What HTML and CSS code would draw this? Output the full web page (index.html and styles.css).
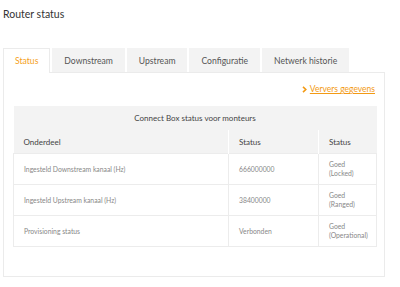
FILE: index.html
```html
<!DOCTYPE html>
<html>
<head>
<meta charset="utf-8">
<link rel="stylesheet" href="styles.css">
</head>
<body>
<h1 class="title">Router status</h1>
<ul class="tabs">
  <li class="tab active">Status</li>
  <li class="tab">Downstream</li>
  <li class="tab">Upstream</li>
  <li class="tab">Configuratie</li>
  <li class="tab">Netwerk historie</li>
</ul>
<div class="panel">
  <div class="actions">
    <a class="refresh" href="#"><svg class="chev" width="5" height="7" viewBox="0 0 5 7"><polyline points="1,0.8 3.8,3.5 1,6.2" fill="none" stroke="#f39a14" stroke-width="1.6"/></svg><span class="refresh-text">Ververs gegevens</span></a>
  </div>
  <table class="status-table">
    <colgroup>
      <col class="c1"><col class="c2"><col class="c3">
    </colgroup>
    <thead>
      <tr class="caption-row"><th colspan="3">Connect Box status voor monteurs</th></tr>
      <tr class="head-row"><th>Onderdeel</th><th>Status</th><th>Status</th></tr>
    </thead>
    <tbody>
      <tr><td>Ingesteld Downstream kanaal (Hz)</td><td>666000000</td><td>Goed<br>(Locked)</td></tr>
      <tr><td>Ingesteld Upstream kanaal (Hz)</td><td>38400000</td><td>Goed<br>(Ranged)</td></tr>
      <tr><td>Provisioning status</td><td>Verbonden</td><td>Goed<br>(Operational)</td></tr>
    </tbody>
  </table>
</div>
</body>
</html>
```
FILE: styles.css
```css
html, body {
  margin: 0;
  padding: 0;
  background: #fff;
}
body {
  padding: 0 3px;
  font-family: Lato, "Open Sans", sans-serif;
  color: #333;
}
.title {
  margin: 0;
  padding-top: 8px;
  height: 40px;
  font-size: 10.5px;
  line-height: 12px;
  font-weight: normal;
  color: #333;
}
.tabs {
  list-style: none;
  margin: 0;
  padding: 0;
  display: flex;
  gap: 2px;
  height: 24px;
  position: relative;
  z-index: 1;
}
.tab {
  height: 24px;
  box-sizing: border-box;
  padding: 0 11px;
  line-height: 24px;
  font-size: 8.6px;
  white-space: nowrap;
  color: #555;
  background: #f3f3f3;
  border: 1px solid #f3f3f3;
  border-bottom: none;
}
.tab.active {
  background: #fff;
  color: #f5a11c;
  border-color: #ebebeb;
  height: 25px;
}
.panel {
  width: 382px;
  height: 205px;
  box-sizing: border-box;
  border: 1px solid #ebebeb;
  padding: 8px 9px 0 9px;
}
.actions {
  display: flex;
  justify-content: flex-end;
  height: 25px;
}
.refresh {
  display: flex;
  align-items: center;
  gap: 3px;
  height: 16px;
  color: #f39a14;
  font-size: 8.5px;
  text-decoration: none;
}
.chev {
  display: block;
}
.refresh-text {
  text-decoration: underline;
}
.status-table {
  width: 363px;
  border-collapse: collapse;
  table-layout: fixed;
}
.c1 { width: 215px; }
.c2 { width: 90px; }
.c3 { width: 58px; }
.status-table th {
  background: #f3f3f3;
  font-weight: normal;
  color: #444;
  font-size: 8px;
  text-align: left;
  padding: 0 10px;
}
.caption-row th {
  text-align: center;
  height: 24px;
}
.head-row th {
  height: 23px;
  border-left: 1px solid #fff;
}
.head-row th:first-child { border-left: none; }
.status-table td {
  font-size: 6.8px;
  line-height: 9px;
  color: #888;
  padding: 0 10px;
  height: 30px;
  border-top: 1px solid #ececec;
  border-left: 1px solid #ececec;
  border-bottom: 1px solid #ececec;
}
.status-table td:last-child {
  border-right: 1px solid #ececec;
}
```
